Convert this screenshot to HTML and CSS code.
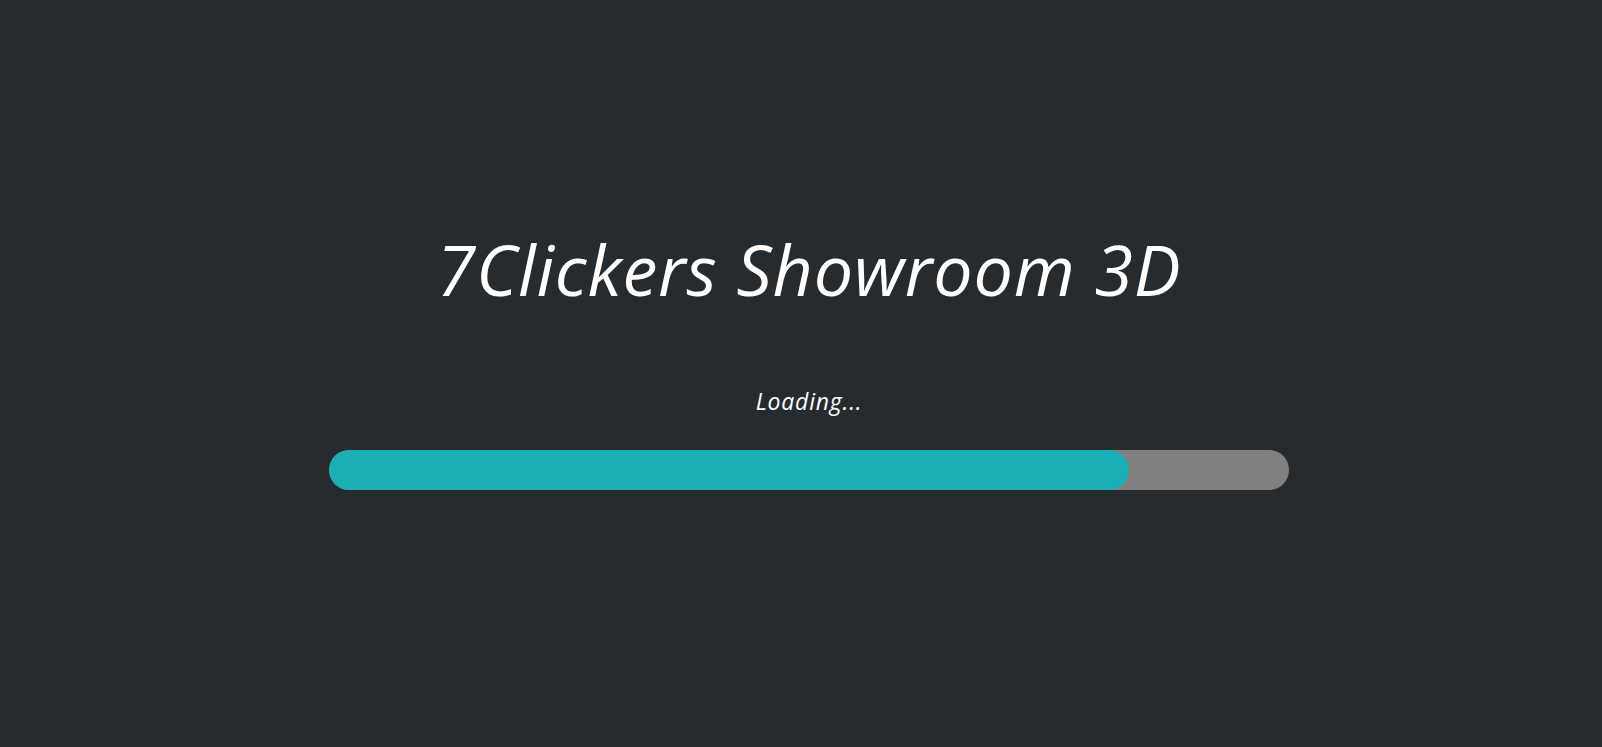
FILE: index.html
```html
<!DOCTYPE html>
<html lang="en">
<head>
<meta charset="utf-8">
<title>7Clickers Showroom 3D</title>
<link rel="stylesheet" href="styles.css">
</head>
<body>
<main class="screen">
  <h1 class="title">7Clickers Showroom 3D</h1>
  <p class="status">Loading...</p>
  <div class="track"><div class="fill" style="width: 83.33%"></div></div>
</main>
</body>
</html>
```
FILE: styles.css
```css
html, body {
  margin: 0;
  height: 100%;
  background: #262b2f;
  overflow: hidden;
}
.screen {
  box-sizing: border-box;
  height: 100%;
  padding-left: 16px;
  padding-top: 221px;
  display: flex;
  flex-direction: column;
  align-items: center;
  color: #ffffff;
  font-family: "Open Sans", "DejaVu Sans", sans-serif;
  font-style: italic;
}
.title {
  margin: 0;
  font-size: 70px;
  font-weight: 400;
  line-height: 96px;
  letter-spacing: 0.8px;
}
.status {
  margin: 69px 0 0;
  font-size: 23px;
  font-weight: 400;
  line-height: 30px;
  letter-spacing: 0.8px;
}
.track {
  margin-top: 34px;
  width: 960px;
  height: 40px;
  border-radius: 20px;
  background: #808080;
  overflow: hidden;
}
.fill {
  height: 100%;
  border-radius: 20px;
  background: #1aafb5;
}
```
